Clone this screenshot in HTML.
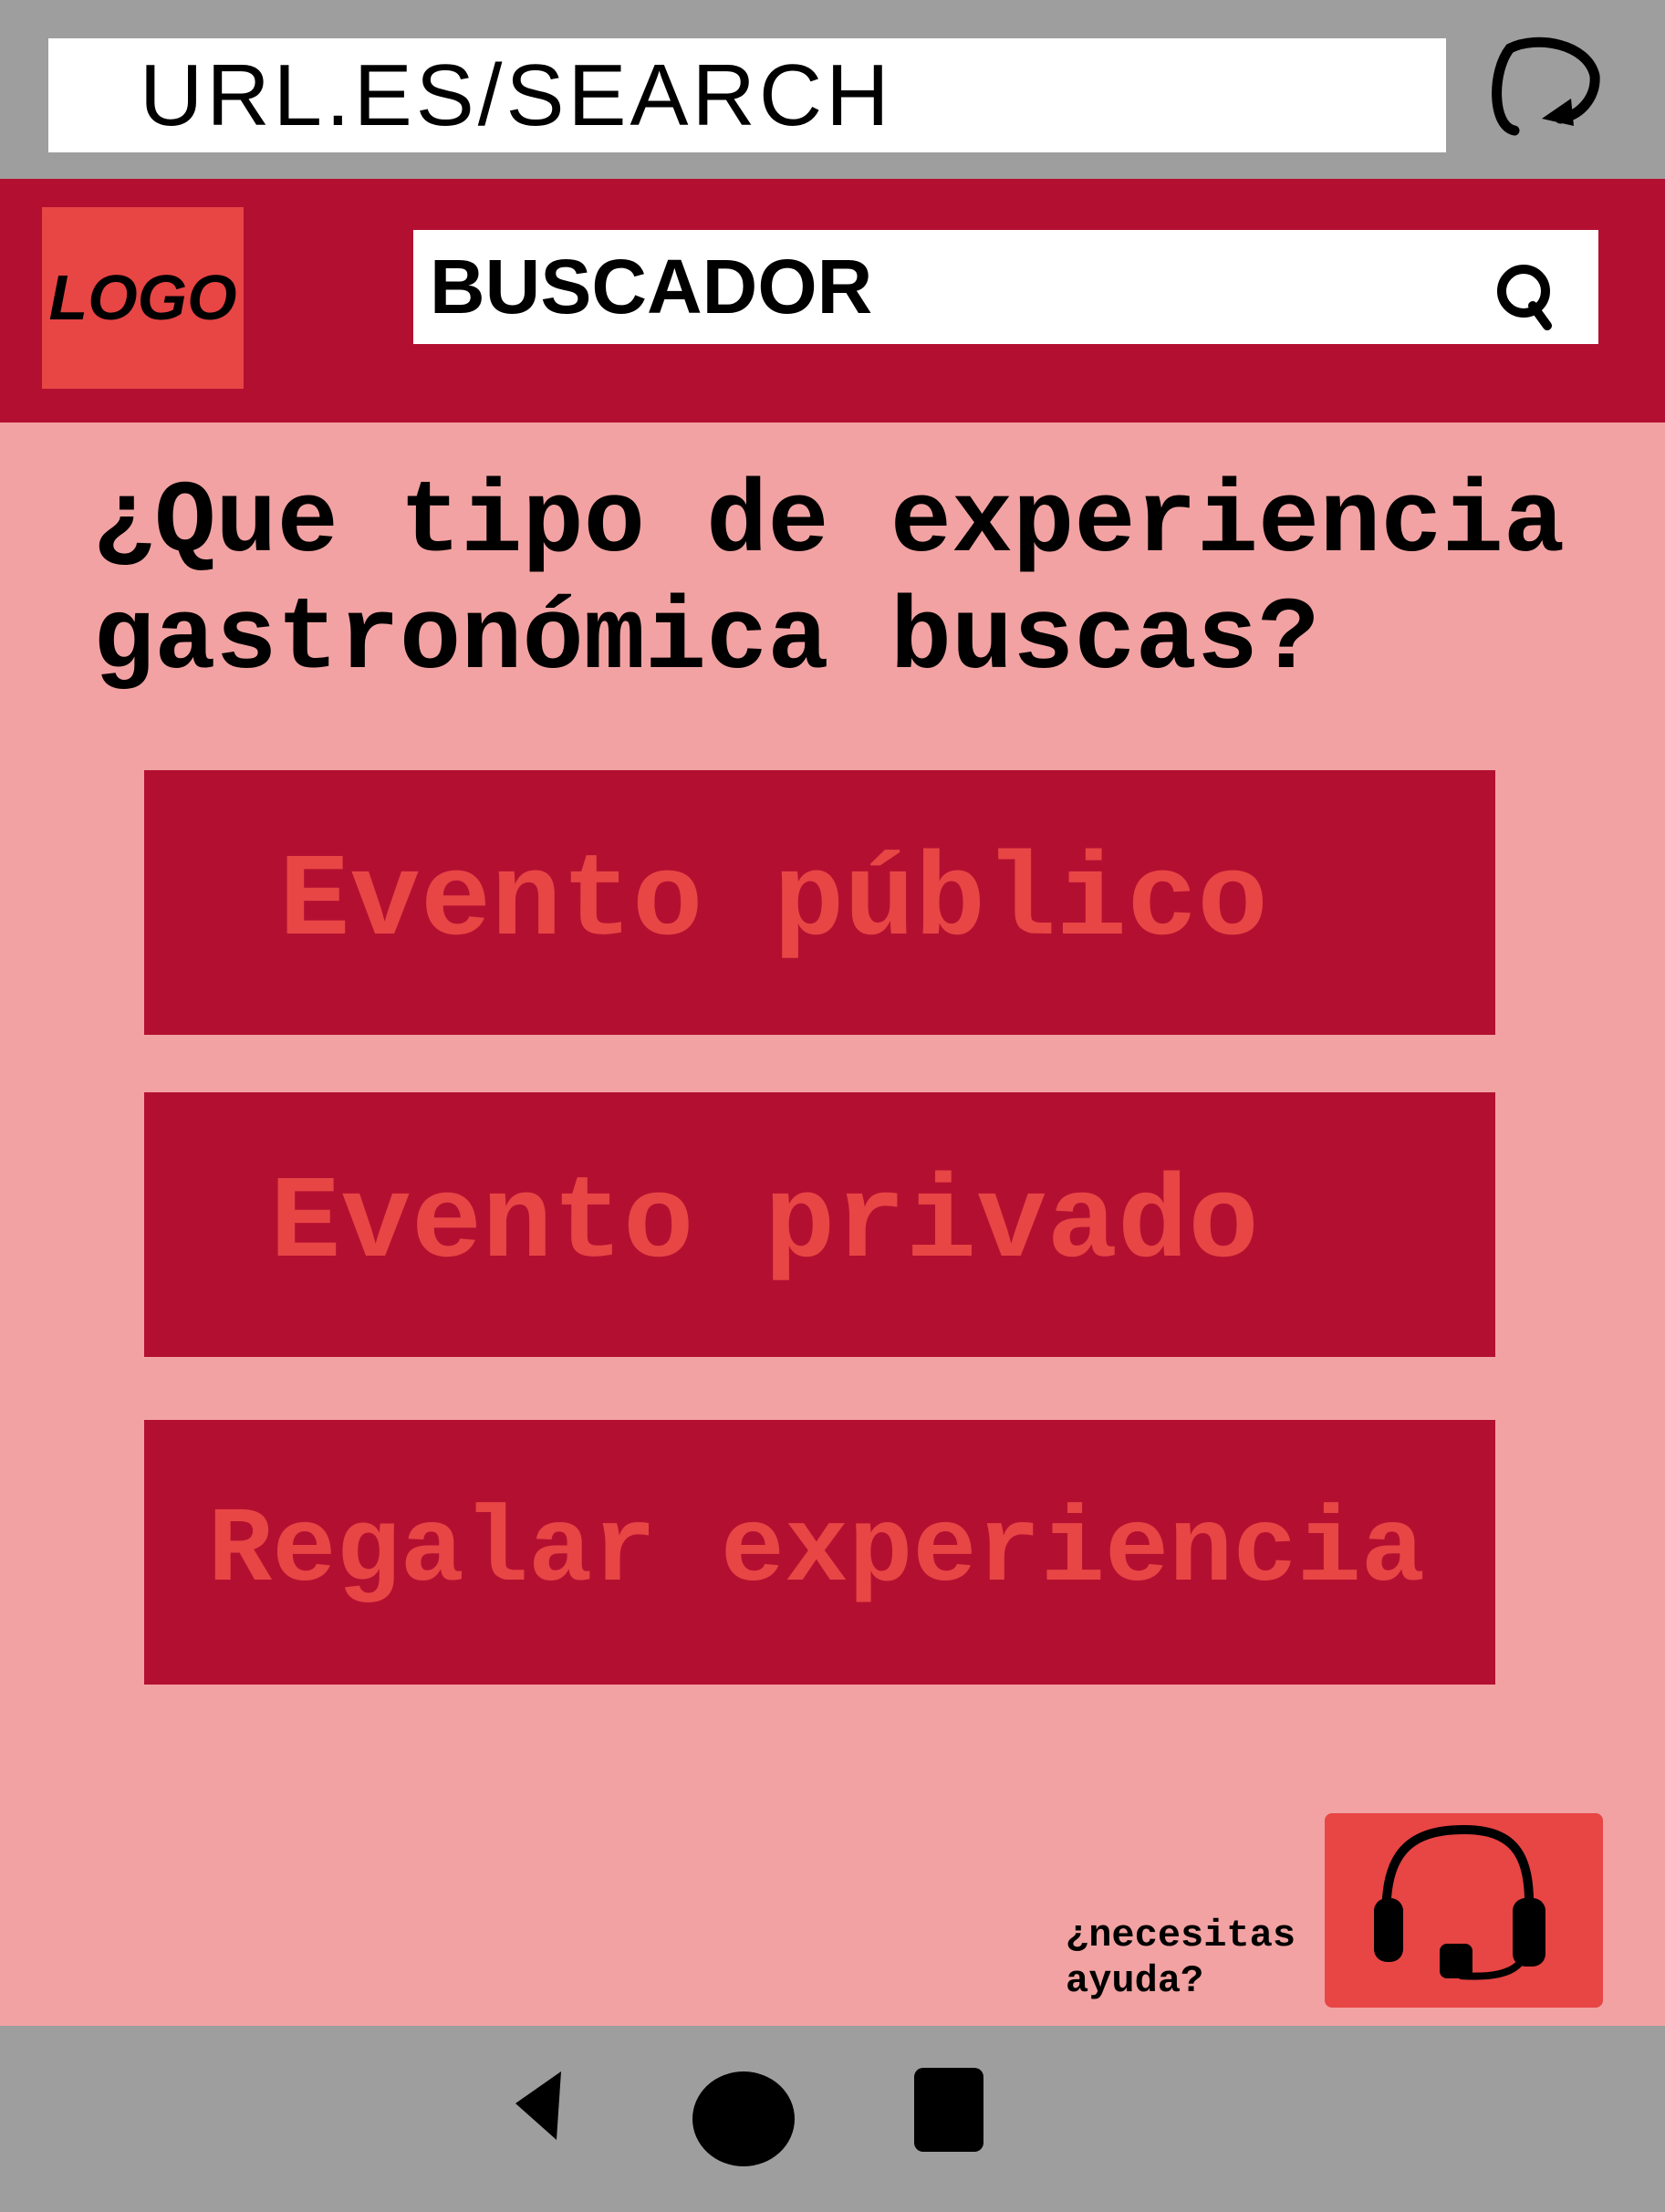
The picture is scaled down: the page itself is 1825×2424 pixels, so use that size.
<!DOCTYPE html>
<html><head><meta charset="utf-8"><style>
*{margin:0;padding:0;box-sizing:border-box}
body{width:1825px;height:2424px;position:relative;background:#f2a2a2;overflow:hidden;font-family:"Liberation Mono",monospace}
.abs{position:absolute}
.top{left:0;top:0;width:1825px;height:196px;background:#9e9e9e}
.url{left:53px;top:42px;width:1532px;height:125px;background:#fff;font-family:"Liberation Sans",sans-serif;font-size:96px;line-height:125px;padding-left:100px;color:#000;letter-spacing:4px}
.hdr{left:0;top:196px;width:1825px;height:267px;background:#b31031}
.logo{left:46px;top:227px;width:221px;height:199px;background:#e84545;font-family:"Liberation Sans",sans-serif;font-weight:bold;font-style:italic;font-size:70px;line-height:199px;text-align:center}
.search{left:453px;top:252px;width:1299px;height:125px;background:#fff;font-family:"Liberation Sans",sans-serif;font-weight:bold;font-size:84px;line-height:125px;padding-left:18px}
h1{position:absolute;left:102px;top:510px;font-size:112px;line-height:128px;font-weight:bold;color:#000;white-space:pre}
.btn{position:absolute;left:158px;width:1481px;height:290px;background:#b31031;color:#e84545;font-weight:bold;font-size:129px;line-height:290px;white-space:pre}
.help{left:1452px;top:1987px;width:305px;height:213px;background:#e84545;border-radius:8px}
.ht{left:1168px;top:2096px;font-size:42px;line-height:50px;font-weight:bold;white-space:pre}
.bot{left:0;top:2220px;width:1825px;height:204px;background:#9e9e9e}
</style></head><body>
<div class="abs top"></div>
<div class="abs url">URL.ES/SEARCH</div>
<svg class="abs" style="left:1630px;top:38px" width="130" height="115" viewBox="0 0 130 115"><path d="M30 105 C5 100 5 40 25 15 C55 0 110 10 118 45 C120 70 100 90 80 92" fill="none" stroke="#000" stroke-width="11" stroke-linecap="round"/><path d="M60 92 L92 70 L95 100 Z" fill="#000"/></svg>
<div class="abs hdr"></div>
<div class="abs logo">LOGO</div>
<div class="abs search">BUSCADOR</div>
<svg class="abs" style="left:1638px;top:285px" width="70" height="80" viewBox="0 0 70 80"><circle cx="32" cy="34" r="24" fill="none" stroke="#000" stroke-width="10"/><path d="M42 50 L58 72" stroke="#000" stroke-width="10" stroke-linecap="round"/></svg>
<h1>¿Que tipo de experiencia
gastronómica buscas?</h1>
<div class="btn" style="top:844px;padding-left:148px">Evento público</div>
<div class="btn" style="top:1197px;padding-left:138px">Evento privado</div>
<div class="btn" style="top:1556px;padding-left:70px;font-size:117px">Regalar experiencia</div>
<div class="abs ht">¿necesitas
ayuda?</div>
<div class="abs help"></div>
<svg class="abs" style="left:1500px;top:1995px" width="210" height="190" viewBox="0 0 210 190"><path d="M20 120 C15 40 40 10 105 10 C170 10 180 50 175 120" fill="none" stroke="#000" stroke-width="10"/><rect x="6" y="85" width="32" height="70" rx="14" fill="#000"/><rect x="158" y="85" width="36" height="75" rx="14" fill="#000"/><path d="M170 150 C160 170 130 172 100 170" fill="none" stroke="#000" stroke-width="8"/><rect x="78" y="135" width="36" height="38" rx="8" fill="#000"/></svg>
<div class="abs bot"></div>
<svg class="abs" style="left:560px;top:2265px" width="65" height="85" viewBox="0 0 65 85"><path d="M5 40 L55 5 L50 80 Z" fill="#000"/></svg>
<svg class="abs" style="left:755px;top:2262px" width="120" height="115" viewBox="0 0 120 115"><ellipse cx="60" cy="60" rx="56" ry="52" fill="#000"/></svg>
<svg class="abs" style="left:998px;top:2262px" width="85" height="100" viewBox="0 0 85 100"><rect x="4" y="4" width="76" height="92" rx="10" fill="#000"/></svg>
</body></html>
